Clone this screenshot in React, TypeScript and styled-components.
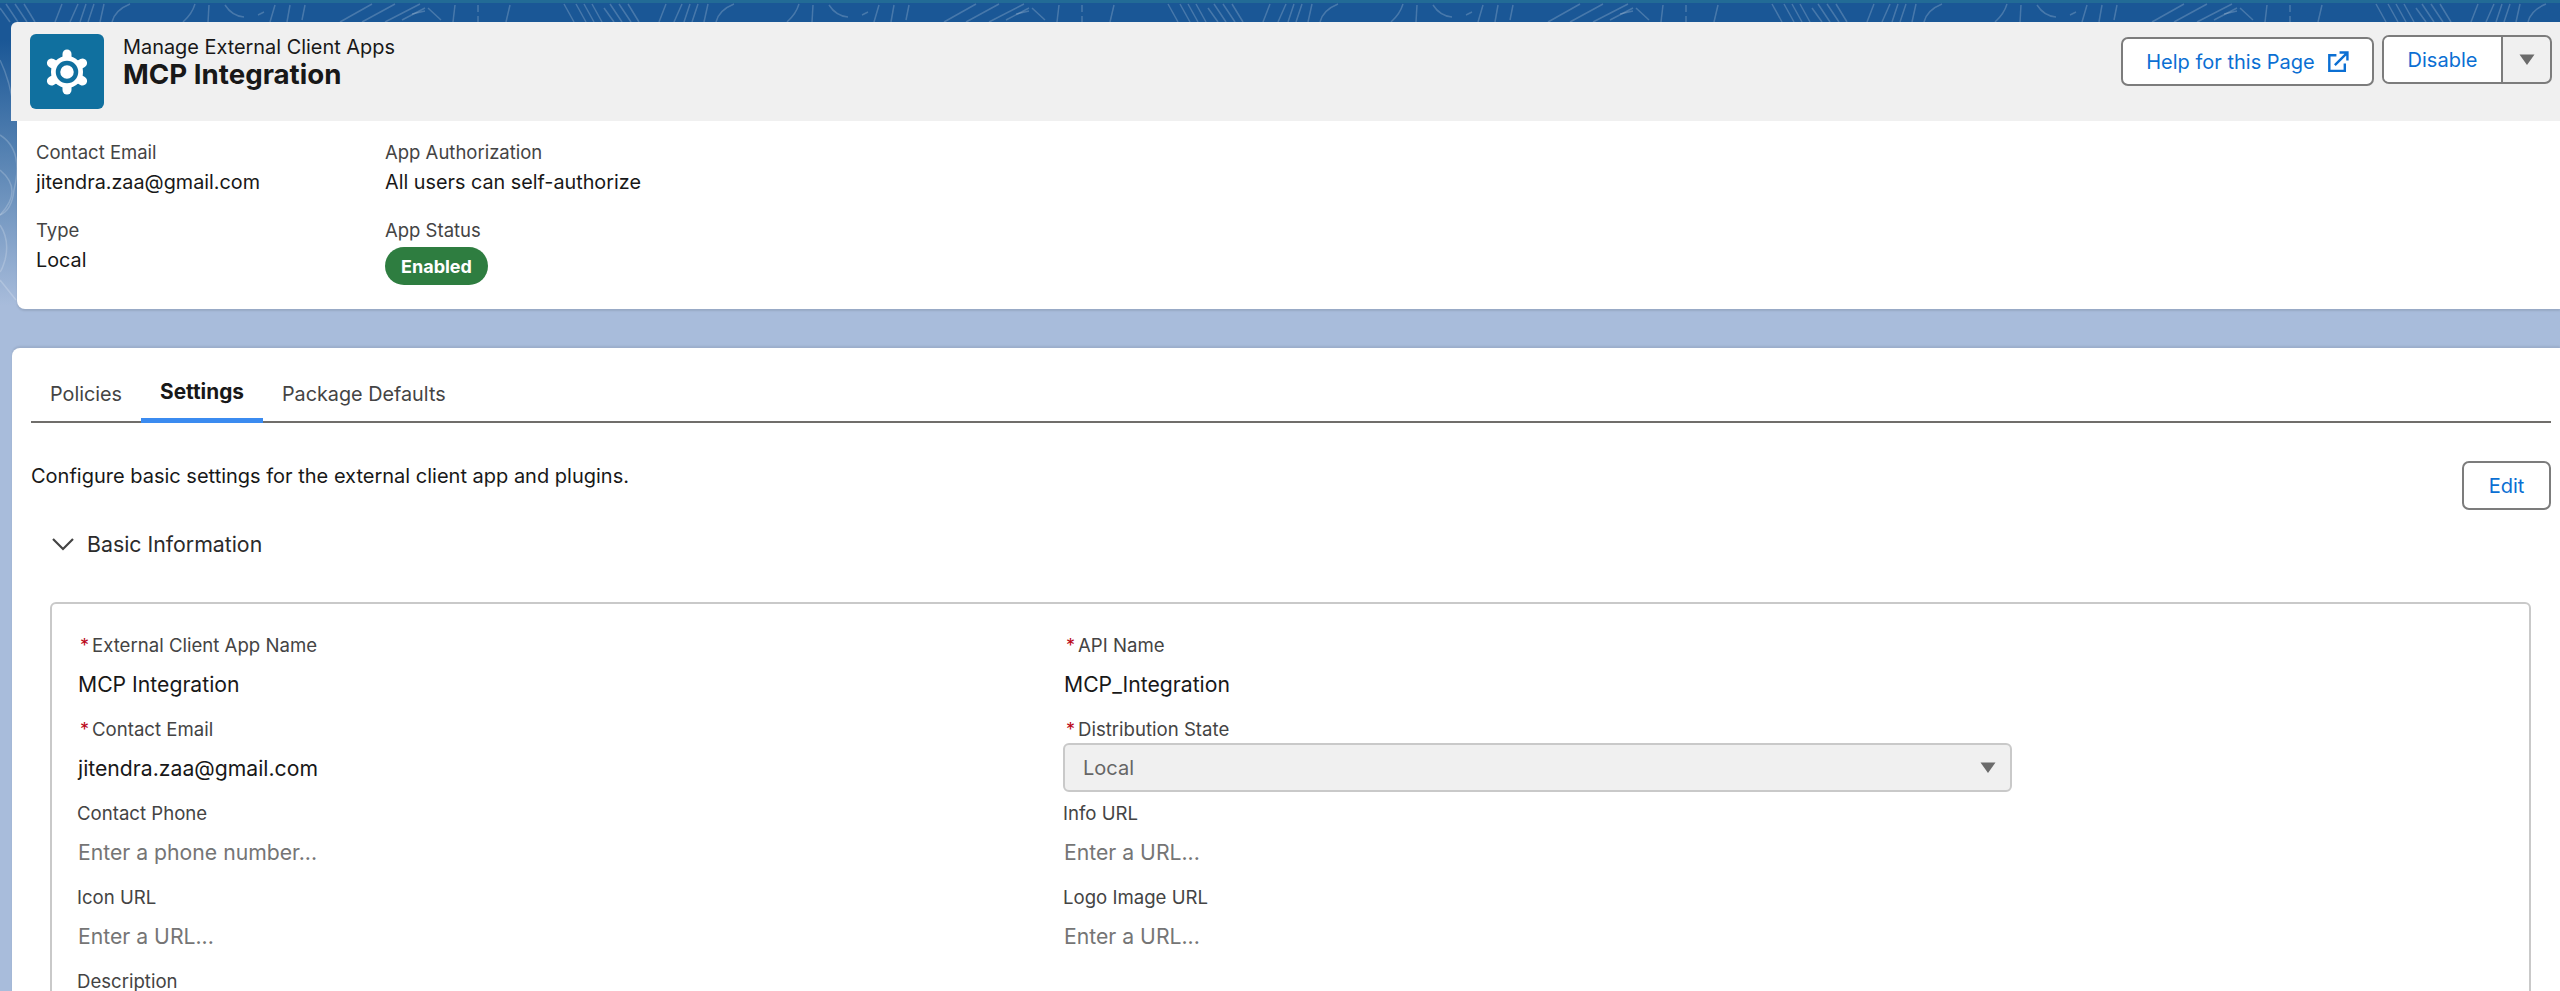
import React from 'react'
import styled, { createGlobalStyle } from 'styled-components'

const GlobalStyle = createGlobalStyle`
  html, body {
    margin: 0;
    padding: 0;
    height: 100%;
    overflow: hidden;
    background: #a8bcdb;
  }
  body {
    font-family: Inter, "Noto Sans", "Liberation Sans", sans-serif;
    color: #181818;
  }
`

const Page = styled.div`
  position: relative;
  height: 991px;
  overflow: hidden;
  padding-top: 22px;
  box-sizing: border-box;
  background: linear-gradient(180deg, #226b96 0, #226b96 3px, #1a5796 3px, #1a5796 40px, #5e88b6 170px, #a8bcdb 305px);
`

const Contours = styled.svg`
  position: absolute;
  top: 0;
  left: 0;
`

const Content = styled.div`
  position: relative;
`

const HeaderBar = styled.header`
  margin-left: 11px;
  height: 99px;
  background: #f0f0f0;
  border-top-left-radius: 6px;
  display: flex;
  justify-content: space-between;
  padding: 12px 8px 0 19px;
  box-sizing: border-box;
`

const TitleGroup = styled.div`
  display: flex;
  gap: 19px;
`

const AppIcon = styled.div`
  width: 74px;
  height: 75px;
  background: #10709f;
  border-radius: 6px;
  display: flex;
  align-items: center;
  justify-content: center;
`

const TitleText = styled.div`
  display: flex;
  flex-direction: column;
`

const Breadcrumb = styled.div`
  font-size: 19.9px;
  line-height: 26px;
`

const AppTitle = styled.h1`
  margin: 0;
  font-size: 27.7px;
  line-height: 28px;
  font-weight: 700;
`

const Actions = styled.div`
  display: flex;
  gap: 8px;
  align-items: flex-start;
`

const Button = styled.button`
  display: inline-flex;
  align-items: center;
  justify-content: center;
  gap: 12px;
  height: 49px;
  box-sizing: border-box;
  background: #fff;
  border: 2px solid #7c7c7c;
  border-radius: 7px;
  color: #0b6fd3;
  font-family: inherit;
  font-size: 20px;
  padding: 0;
`

const HelpButton = styled(Button)`
  width: 253px;
  margin-top: 3px;
`

const SplitButton = styled.div`
  display: flex;
  width: 170px;
  height: 49px;
  margin-top: 1px;
  box-sizing: border-box;
  border: 2px solid #7c7c7c;
  border-radius: 7px;
  overflow: hidden;
`

const SplitMain = styled.span`
  flex: 1;
  background: #fff;
  color: #0b6fd3;
  font-size: 20px;
  display: flex;
  align-items: center;
  justify-content: center;
  border-right: 2px solid #7c7c7c;
`

const SplitArrow = styled.span`
  width: 47px;
  display: flex;
  align-items: center;
  justify-content: center;
`

const Highlights = styled.section`
  margin-left: 17px;
  height: 188px;
  background: #fff;
  border-bottom-left-radius: 8px;
  box-shadow: 0 2px 2px rgba(0, 0, 0, 0.1);
  padding: 19px 0 0 19px;
  box-sizing: border-box;
  display: grid;
  grid-template-columns: 349px 1fr;
  grid-template-rows: 78px 78px;
`

const HighlightItem = styled.div`
  display: flex;
  flex-direction: column;
`

const HighlightLabel = styled.span`
  font-size: 18.5px;
  line-height: 24px;
  color: #444;
`

const HighlightValue = styled.span`
  font-size: 19.8px;
  line-height: 26px;
  margin-top: 5px;
`

const Badge = styled.span`
  width: 103px;
  height: 38px;
  margin-top: 5px;
  border-radius: 19px;
  background: #2e7d40;
  color: #fff;
  font-size: 18px;
  font-weight: 700;
  display: flex;
  align-items: center;
  justify-content: center;
`

const MainCard = styled.main`
  margin: 39px 0 0 12px;
  height: 700px;
  background: #fff;
  border-top-left-radius: 8px;
  box-shadow: 0 -2px 2px rgba(0, 0, 0, 0.08);
  padding: 22px 9px 0 19px;
  box-sizing: border-box;
`

const TabBar = styled.nav`
  display: flex;
  height: 53px;
  box-sizing: border-box;
  border-bottom: 2px solid #706e6b;
`

const Tab = styled.a<{ $active?: boolean }>`
  height: 53px;
  box-sizing: border-box;
  padding: 0 19px;
  display: flex;
  align-items: center;
  padding-bottom: 5px;
  font-size: ${(p) => (p.$active ? '20.8px' : '19.8px')};
  font-weight: ${(p) => (p.$active ? 700 : 400)};
  color: ${(p) => (p.$active ? '#181818' : '#444')};
  border-bottom: ${(p) => (p.$active ? '5px solid #3b8bf0' : 'none')};
`

const SettingsRow = styled.div`
  display: flex;
  justify-content: space-between;
  align-items: flex-start;
  height: 39px;
  margin-top: 38px;
`

const Intro = styled.p`
  margin: 2px 0 0;
  font-size: 20px;
  line-height: 26px;
  color: #181818;
`

const EditButton = styled(Button)`
  width: 89px;
`

const SectionHeader = styled.div`
  display: flex;
  align-items: center;
  gap: 13px;
  height: 30px;
  margin: 29px 0 0 21px;
  font-size: 21.3px;
  color: #2b2b2b;
`

const FieldBox = styled.div`
  margin: 43px 20px 0 19px;
  height: 500px;
  border: 2px solid #c9c9c9;
  border-radius: 6px;
  padding: 28px 0 0 25px;
  box-sizing: border-box;
  display: grid;
  grid-template-columns: 986px 949px;
  grid-auto-rows: 84px;
`

const Field = styled.div`
  display: flex;
  flex-direction: column;
`

const FieldLabel = styled.label`
  display: flex;
  align-items: center;
  height: 18px;
  margin: 4px 0;
  font-size: 18.6px;
  color: #444;
`

const Required = styled.abbr`
  color: #ba0517;
  font-size: 18px;
  width: 15px;
  padding-left: 3px;
  box-sizing: border-box;
`

const FieldValue = styled.div<{ $placeholder?: boolean }>`
  height: 26px;
  margin-top: 13px;
  padding-left: 1px;
  font-size: 21.2px;
  line-height: 26px;
  color: ${(p) => (p.$placeholder ? '#757575' : '#181818')};
`

const SelectBox = styled.div`
  height: 49px;
  width: 949px;
  box-sizing: border-box;
  margin-top: 1px;
  border: 2px solid #c9c9c9;
  border-radius: 6px;
  background: #f0f0f0;
  color: #666;
  font-size: 20px;
  display: flex;
  align-items: center;
  justify-content: space-between;
  padding: 0 14px 0 18px;
`

// contour strokes seen along the top band and down the left edge
const bandLines = [
  'M-40 4L-30 22', 'M-28 4L-18 22', 'M-20 4L-10 22', 'M-12 4L-2 22',
  'M0 8L10 22', 'M6 4L18 22', 'M15 4L27 22', 'M24 4L35 22',
  'M62 4L55 22', 'M78 4L70 22', 'M86 4L80 22', 'M94 4L88 22', 'M104 4L100 22', 'M130 4Q115 10 112 22',
  'M195 4Q192 14 183 22', 'M209 5L208 22', 'M225 5Q232 16 244 17', 'M258 15L264 12', 'M275 5L270 22', 'M290 5L287 22', 'M305 5L302 20',
  'M340 22L372 4', 'M362 22L395 4', 'M385 22L420 4', 'M402 20L425 8', 'M412 14L425 11', 'M428 8L441 20',
  'M455 5L453 22', 'M478 5L478 12', 'M478 16L478 22', 'M510 5L506 22',
]

const edgeLines = [
  'M0 60Q10 80 14 110', 'M0 135Q24 150 14 190Q12 210 0 215', 'M0 170Q24 190 0 215', 'M0 225Q10 240 5 260Q2 270 0 272',
  'M0 280Q8 290 16 300',
]

const tileOffsets = [0, 604, 1208, 1812, 2416]

const Gear = () => (
  <svg width="48" height="48" viewBox="-24 -24 48 48">
    {[0, 60, 120, 180, 240, 300].map((a) => (
      <line key={a} x1="0" y1="0" x2="0" y2="-18" stroke="#fff" strokeWidth="9" strokeLinecap="round" transform={`rotate(${a})`} />
    ))}
    <circle r="16" fill="#fff" />
    <circle r="9" fill="none" stroke="#10709f" strokeWidth="4.5" />
  </svg>
)

const ExternalIcon = () => (
  <svg width="22" height="22" viewBox="0 0 21 21" fill="none" stroke="#0b6fd3" strokeWidth="2.3">
    <path d="M9 4H2.2V19H17V12" />
    <path d="M7.5 13.5L19 2M12 1.5H19.5V9" />
  </svg>
)

const Caret = ({ size }: { size: number }) => (
  <svg width={size} height={size * 0.72} viewBox="0 0 16 11.5">
    <path d="M0.5 0.5H15.5L8 11Z" fill="#6b6b6b" />
  </svg>
)

const Chevron = () => (
  <svg width="22" height="14" viewBox="0 0 22 14" fill="none" stroke="#444" strokeWidth="2.2">
    <path d="M1 2L11 12L21 2" />
  </svg>
)

const App: React.FC = () => (
  <Page>
    <GlobalStyle />
    <Contours width="2560" height="320" fill="none" stroke="rgba(255,255,255,0.2)" strokeWidth="1.5">
      {tileOffsets.map((x) => (
        <g key={x} transform={`translate(${x} 0)`}>
          {bandLines.map((d) => <path key={d} d={d} />)}
        </g>
      ))}
      {edgeLines.map((d) => <path key={d} d={d} />)}
    </Contours>
    <Content>
      <HeaderBar>
        <TitleGroup>
          <AppIcon><Gear /></AppIcon>
          <TitleText>
            <Breadcrumb>Manage External Client Apps</Breadcrumb>
            <AppTitle>MCP Integration</AppTitle>
          </TitleText>
        </TitleGroup>
        <Actions>
          <HelpButton>Help for this Page <ExternalIcon /></HelpButton>
          <SplitButton>
            <SplitMain>Disable</SplitMain>
            <SplitArrow><Caret size={16} /></SplitArrow>
          </SplitButton>
        </Actions>
      </HeaderBar>
      <Highlights>
        <HighlightItem>
          <HighlightLabel>Contact Email</HighlightLabel>
          <HighlightValue>jitendra.zaa@gmail.com</HighlightValue>
        </HighlightItem>
        <HighlightItem>
          <HighlightLabel>App Authorization</HighlightLabel>
          <HighlightValue>All users can self-authorize</HighlightValue>
        </HighlightItem>
        <HighlightItem>
          <HighlightLabel>Type</HighlightLabel>
          <HighlightValue>Local</HighlightValue>
        </HighlightItem>
        <HighlightItem>
          <HighlightLabel>App Status</HighlightLabel>
          <Badge>Enabled</Badge>
        </HighlightItem>
      </Highlights>
      <MainCard>
        <TabBar>
          <Tab>Policies</Tab>
          <Tab $active>Settings</Tab>
          <Tab>Package Defaults</Tab>
        </TabBar>
        <SettingsRow>
          <Intro>Configure basic settings for the external client app and plugins.</Intro>
          <EditButton>Edit</EditButton>
        </SettingsRow>
        <SectionHeader><Chevron /> Basic Information</SectionHeader>
        <FieldBox>
          <Field>
            <FieldLabel><Required>*</Required>External Client App Name</FieldLabel>
            <FieldValue>MCP Integration</FieldValue>
          </Field>
          <Field>
            <FieldLabel><Required>*</Required>API Name</FieldLabel>
            <FieldValue>MCP_Integration</FieldValue>
          </Field>
          <Field>
            <FieldLabel><Required>*</Required>Contact Email</FieldLabel>
            <FieldValue>jitendra.zaa@gmail.com</FieldValue>
          </Field>
          <Field>
            <FieldLabel><Required>*</Required>Distribution State</FieldLabel>
            <SelectBox>Local <Caret size={16} /></SelectBox>
          </Field>
          <Field>
            <FieldLabel>Contact Phone</FieldLabel>
            <FieldValue $placeholder>Enter a phone number...</FieldValue>
          </Field>
          <Field>
            <FieldLabel>Info URL</FieldLabel>
            <FieldValue $placeholder>Enter a URL...</FieldValue>
          </Field>
          <Field>
            <FieldLabel>Icon URL</FieldLabel>
            <FieldValue $placeholder>Enter a URL...</FieldValue>
          </Field>
          <Field>
            <FieldLabel>Logo Image URL</FieldLabel>
            <FieldValue $placeholder>Enter a URL...</FieldValue>
          </Field>
          <Field>
            <FieldLabel>Description</FieldLabel>
          </Field>
        </FieldBox>
      </MainCard>
    </Content>
  </Page>
)

export default App
